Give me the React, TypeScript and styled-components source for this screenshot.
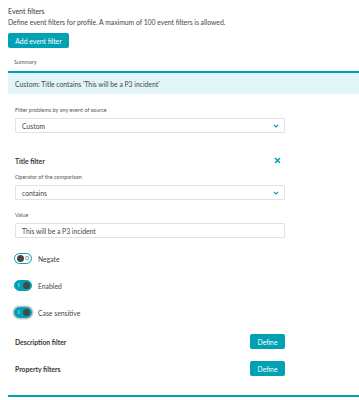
import styled, { createGlobalStyle } from "styled-components";

const GlobalStyle = createGlobalStyle`
  body {
    margin: 0;
    background: #fff;
    font-family: Lato, "Open Sans", sans-serif;
    color: #454646;
  }
`;

const Page = styled.div`
  width: 359px;
  height: 400px;
  overflow: hidden;
  padding: 7px 0 0 8px;
  box-sizing: border-box;
`;

const Heading = styled.div`
  font-size: 7px;
  line-height: 8px;
  color: #353535;
`;

const Desc = styled.div`
  font-size: 6.8px;
  line-height: 8px;
  margin-top: 3px;
  color: #454646;
`;

const Button = styled.button<{ $width?: number }>`
  display: flex;
  align-items: center;
  justify-content: center;
  height: 15px;
  width: ${(p) => p.$width ?? 61}px;
  padding: 0;
  border: none;
  border-radius: 2px;
  background: #00a1b2;
  color: #fff;
  font-family: inherit;
  font-size: 6.8px;
  font-weight: 400;
`;

const AddButton = styled(Button)`
  margin-top: 7px;
`;

const SummaryHead = styled.div`
  font-size: 5.5px;
  line-height: 8px;
  padding: 10px 0 5px 6px;
  color: #555;
`;

const Panel = styled.div`
  width: 400px;
  border-top: 2px solid #00a1b2;
`;

const SummaryRow = styled.div`
  height: 21px;
  background: #e2f5f8;
  display: flex;
  align-items: center;
  padding-left: 7px;
  font-size: 6.8px;
  color: #454646;
`;

const Body = styled.div`
  width: 270px;
  padding: 0 0 0 7px;
`;

const Field = styled.div<{ $top: number }>`
  margin-top: ${(p) => p.$top}px;
`;

const Label = styled.div`
  font-size: 5.5px;
  line-height: 8px;
  color: #555;
  margin-bottom: 4px;
`;

const Box = styled.div`
  height: 15px;
  box-sizing: border-box;
  border: 1px solid #e2e2e2;
  border-radius: 1px;
  display: flex;
  align-items: center;
  justify-content: space-between;
  padding: 0 5px 0 6px;
  font-size: 6.8px;
  color: #454646;
`;

const SectionRow = styled.div<{ $top: number }>`
  margin-top: ${(p) => p.$top}px;
  display: flex;
  align-items: center;
  justify-content: space-between;
  height: 15px;
`;

const SectionTitle = styled.div`
  font-size: 6.8px;
  font-weight: 700;
  color: #353535;
`;

const CloseIcon = styled.svg`
  width: 7px;
  height: 7px;
  margin-right: 4px;
`;

const ToggleRow = styled.div<{ $top: number }>`
  margin-top: ${(p) => p.$top}px;
  display: flex;
  align-items: center;
  gap: 6px;
  height: 11px;
  margin-left: -1px;
  font-size: 6.8px;
  color: #454646;
`;

const Track = styled.div<{ $on: boolean; $focus?: boolean }>`
  width: 18px;
  height: 11px;
  box-sizing: border-box;
  border-radius: 6px;
  border: 1px solid #00a1b2;
  background: ${(p) => (p.$on ? "#00a1b2" : "#fff")};
  display: flex;
  align-items: center;
  justify-content: space-between;
  flex-direction: ${(p) => (p.$on ? "row" : "row-reverse")};
  padding: 0 1px 0 2px;
  box-shadow: ${(p) => (p.$focus ? "0 0 0 1.5px #c8cccc" : "none")};
`;

const Knob = styled.div`
  width: 7px;
  height: 7px;
  border-radius: 50%;
  background: #454646;
`;

const Mark = styled.span<{ $on: boolean }>`
  font-size: 5px;
  line-height: 1;
  color: ${(p) => (p.$on ? "#fff" : "#454646")};
  padding: ${(p) => (p.$on ? "0 0 0 1px" : "0 1px 0 0")};
`;

const Chevron = () => (
  <svg width="6" height="4" viewBox="0 0 6 4">
    <path d="M0.8 0.8 L3 3 L5.2 0.8" stroke="#00a1b2" strokeWidth="1.2" fill="none" />
  </svg>
);

const Toggle = ({ on, focus, label, top }: { on: boolean; focus?: boolean; label: string; top: number }) => (
  <ToggleRow $top={top}>
    <Track $on={on} $focus={focus}>
      <Mark $on={on}>{on ? "I" : "O"}</Mark>
      <Knob />
    </Track>
    {label}
  </ToggleRow>
);

const Bottom = styled.div`
  margin-top: 19px;
  width: 400px;
  border-top: 2px solid #00a1b2;
`;

export default function App() {
  return (
    <>
      <GlobalStyle />
      <Page>
        <Heading>Event filters</Heading>
        <Desc>Define event filters for profile. A maximum of 100 event filters is allowed.</Desc>
        <AddButton>Add event filter</AddButton>
        <SummaryHead>Summary</SummaryHead>
        <Panel>
          <SummaryRow>Custom: Title contains 'This will be a P3 incident'</SummaryRow>
        </Panel>
        <Body>
          <Field $top={12}>
            <Label>Filter problems by any event of source</Label>
            <Box>
              Custom
              <Chevron />
            </Box>
          </Field>
          <SectionRow $top={20}>
            <SectionTitle>Title filter</SectionTitle>
            <CloseIcon viewBox="0 0 7 7">
              <path d="M1 1 L6 6 M6 1 L1 6" stroke="#00a1b2" strokeWidth="1.5" />
            </CloseIcon>
          </SectionRow>
          <Field $top={5}>
            <Label>Operator of the comparison</Label>
            <Box>
              contains
              <Chevron />
            </Box>
          </Field>
          <Field $top={11}>
            <Label>Value</Label>
            <Box>This will be a P3 incident</Box>
          </Field>
          <Toggle top={15} on={false} label="Negate" />
          <Toggle top={16} on label="Enabled" />
          <Toggle top={16} on focus label="Case sensitive" />
          <SectionRow $top={16}>
            <SectionTitle>Description filter</SectionTitle>
            <Button $width={35}>Define</Button>
          </SectionRow>
          <SectionRow $top={12}>
            <SectionTitle>Property filters</SectionTitle>
            <Button $width={35}>Define</Button>
          </SectionRow>
        </Body>
        <Bottom />
      </Page>
    </>
  );
}
